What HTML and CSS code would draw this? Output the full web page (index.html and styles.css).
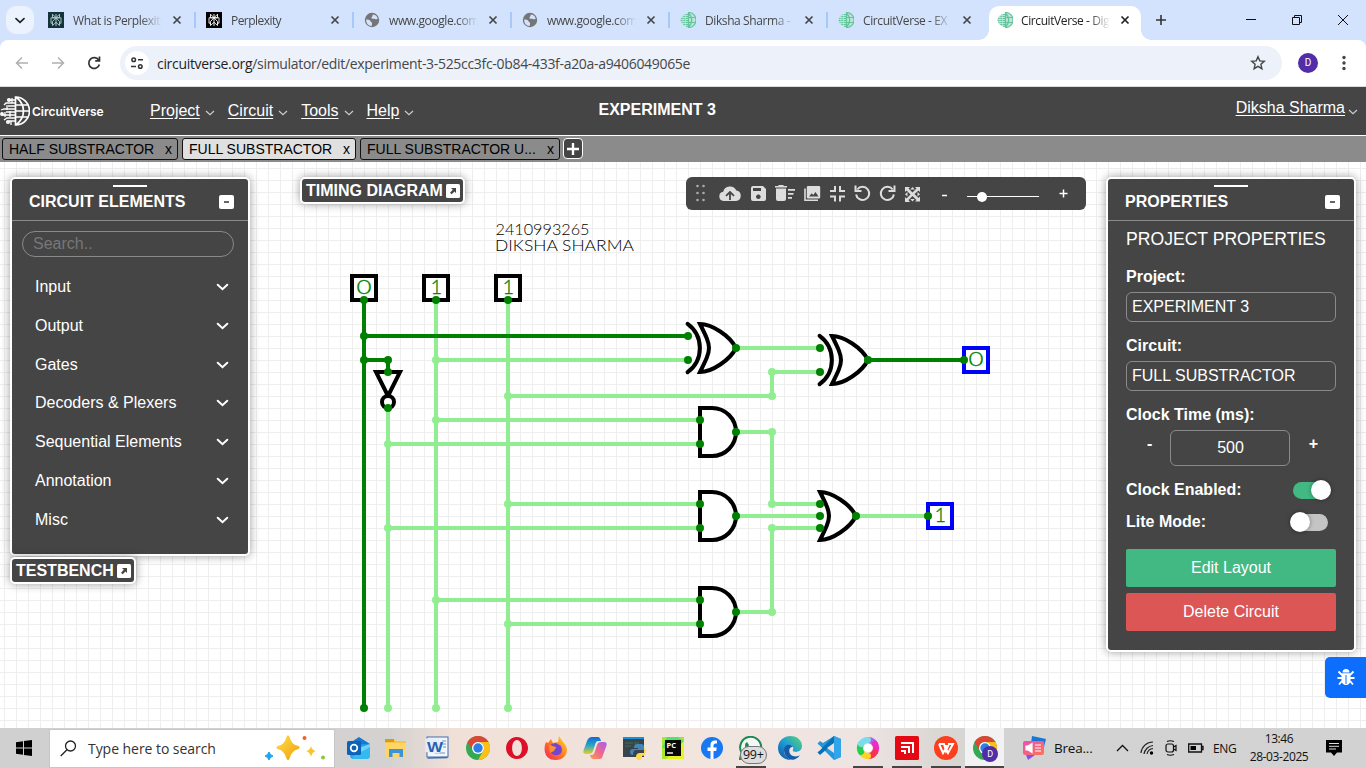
FILE: index.html
```html
<!DOCTYPE html>
<html lang="en">
<head>
<meta charset="utf-8">
<title>CircuitVerse - Digital Circuit Simulator</title>
<link rel="stylesheet" href="styles.css">
</head>
<body>
<svg class="defs" aria-hidden="true">
  <defs>
    <symbol id="x" viewBox="0 0 10 10"><path d="M1.500 1.500l7 7M8.500 1.500l-7 7" stroke="currentColor" stroke-width="1.700" fill="none"/></symbol>
    <symbol id="perp" viewBox="0 0 16 16"><g fill="none" stroke="currentColor" stroke-width=".9"><path d="M8 2v12M4.500 2.200L8 5.700l3.500-3.500v3.600h-7zM3 5.800h10v5.400h-1.500M3 5.800v5.400h1.500M8 5.800l-3.500 3.700v4L8 10.300l3.500 3.200v-4z"/></g></symbol>
    <symbol id="earth" viewBox="0 0 16 16"><circle cx="8" cy="8" r="7.200" fill="#757575"/><path d="M2.200 7.500c2 .2 3.500 0 4.300 1.700.8 1.400 2 1.200 1.500 3-.3 1 .2 1.700-.8 1.800C4 13.500 2 11 2.200 7.500zM8.500 2.400c2.500 0 4.600 1.500 5.200 4-1 1.200-1.700 1-2.700.6-1.300-.5-2.700.4-3.400-.8C7 4.800 9.200 4.500 8.500 2.400z" fill="#d3e3fd"/></symbol>
    <symbol id="globe" viewBox="0 0 30 30"><g fill="none" stroke="currentColor" stroke-width="1.700"><path d="M15.500 1a14 14 0 0 1 0 28zM16 1c10 8 10 20 0 28M15 9h13M15 15h14M15 21h13"/><path d="M15 4H9M15 7H6l-2 2M15 10H8M15 13H4l-3 1M15 16H6M15 19H2M15 22H7l-3 2M15 25H9M12 2v5M11 25v4M7 9v5M5 16v5M10 15v6" stroke-width="1.300"/><circle cx="9" cy="4" r="1.200"/><circle cx="2" cy="18" r="1.100"/><circle cx="8" cy="26" r="1.200"/></g></symbol>
    <symbol id="favglobe" viewBox="0 0 16 16"><path d="M8 .5a7.500 7.500 0 0 1 0 15zM8 2Q1 2 .5 8 1 14 8 15z" fill="#b9e6d6"/><g fill="none" stroke="currentColor"><path d="M8.500.5a7.500 7.500 0 0 1 0 15zM8.500 1q6.500 7 0 14M8 5.500h7M8 10.500h7" stroke-width="1.200"/><path d="M8 2.500H4.500M8 4.500H2.500M8 6.500H1M8 8.500H0M8 10.500H1.500M8 12.500H3M8 14.300H5.500" stroke-dasharray="2 .7"/></g></symbol>
    <symbol id="chev" viewBox="0 0 12 8"><path d="M1.200 1.800L6 6.200l4.800-4.400" fill="none" stroke="currentColor" stroke-width="2" stroke-linecap="round"/></symbol>
    <symbol id="thin" viewBox="0 0 10 6"><path d="M1 1l4 3.600L9 1" fill="none" stroke="currentColor" stroke-width="1.200"/></symbol>
    <symbol id="chrome" viewBox="0 0 24 24"><circle cx="12" cy="12" r="12" fill="#34a853"/><path d="M1.600 6A12 12 0 0 1 22.400 6H12a6 6 0 0 0-5.200 9z" fill="#dd4535"/><path d="M22.400 6A12 12 0 0 1 12 24l5.200-9A6 6 0 0 0 12 6z" fill="#fbc116"/><circle cx="12" cy="12" r="6" fill="#fff"/><circle cx="12" cy="12" r="4.700" fill="#2f7de9"/></symbol>
    <symbol id="pop" viewBox="0 0 14 14"><rect width="14" height="14" rx="1.500" fill="#fff"/><path d="M5 4h5v5L8.500 7.500 5.700 10.300 4 8.700l2.800-2.900z" fill="#454545"/></symbol>
    <linearGradient id="fire" x1="0" y1="1" x2="1" y2="0"><stop offset="0" stop-color="#f31f66"/><stop offset=".5" stop-color="#ff7a20"/><stop offset="1" stop-color="#ffe030"/></linearGradient>
    <linearGradient id="cpA" x1="0" y1="0" x2="0" y2="1"><stop offset="0" stop-color="#1465d8"/><stop offset=".5" stop-color="#27a8c8"/><stop offset="1" stop-color="#e8cf22"/></linearGradient>
    <linearGradient id="cpB" x1="1" y1="0" x2="0" y2="1"><stop offset="0" stop-color="#a65ef0"/><stop offset=".5" stop-color="#ef6590"/><stop offset="1" stop-color="#ff9c50"/></linearGradient>
    <linearGradient id="edge" x1="0" y1="1" x2="1" y2="0"><stop offset="0" stop-color="#0c4f9e"/><stop offset=".5" stop-color="#209cd8"/><stop offset="1" stop-color="#5bd66d"/></linearGradient>
    <linearGradient id="gold" x1="0" y1="0" x2="1" y2="1"><stop offset="0" stop-color="#ffda45"/><stop offset="1" stop-color="#f0a410"/></linearGradient>
    <linearGradient id="news" x1="0" y1="0" x2="1" y2="1"><stop offset="0" stop-color="#ea4fb4"/><stop offset="1" stop-color="#ff7550"/></linearGradient>
  </defs>
</svg>

<header class="tabstrip">
  <div class="tab-search"><svg width="10" height="7"><use href="#chev"/></svg></div>
  <div class="tab"><svg class="fav perp teal" ><use href="#perp"/></svg><span class="t">What is Perplexity</span><svg class="close"><use href="#x"/></svg></div>
  <div class="tab"><svg class="fav perp black"><use href="#perp"/></svg><span class="t">Perplexity</span><svg class="close"><use href="#x"/></svg></div>
  <div class="tab"><svg class="fav"><use href="#earth"/></svg><span class="t">www.google.com</span><svg class="close"><use href="#x"/></svg></div>
  <div class="tab"><svg class="fav"><use href="#earth"/></svg><span class="t">www.google.com</span><svg class="close"><use href="#x"/></svg></div>
  <div class="tab"><svg class="fav green"><use href="#favglobe"/></svg><span class="t">Diksha Sharma -</span><svg class="close"><use href="#x"/></svg></div>
  <div class="tab last"><svg class="fav green"><use href="#favglobe"/></svg><span class="t">CircuitVerse - EX</span><svg class="close"><use href="#x"/></svg></div>
  <div class="tab active"><svg class="fav green"><use href="#favglobe"/></svg><span class="t">CircuitVerse - Dig</span><svg class="close"><use href="#x"/></svg></div>
  <svg class="newtab" width="12" height="12" viewBox="0 0 12 12"><path d="M6 1v10M1 6h10" stroke="#333" stroke-width="1.600"/></svg>
  <div class="win">
    <svg width="12" height="12" viewBox="0 0 12 12"><path d="M1 5.500h10" stroke="#111"/></svg>
    <svg width="12" height="12" viewBox="0 0 12 12"><path d="M1.500 3.500h7v7h-7zM3.500 3.500v-2h7v7h-2" fill="none" stroke="#111"/></svg>
    <svg width="12" height="12" viewBox="0 0 12 12"><path d="M1 1l10 10M11 1L1 11" stroke="#111"/></svg>
  </div>
</header>

<div class="toolbar">
  <div class="toolbar-in">
    <svg class="nav" viewBox="0 0 16 16"><path d="M14 8H3M8 2.500L2.500 8 8 13.500" fill="none" stroke="#b0b0b0" stroke-width="1.500"/></svg>
    <svg class="nav" viewBox="0 0 16 16"><path d="M2 8h11M8 2.500L13.500 8 8 13.500" fill="none" stroke="#b0b0b0" stroke-width="1.500"/></svg>
    <svg class="nav" viewBox="0 0 16 16"><path d="M12.700 5A5.400 5.400 0 1 0 13.400 9.500M13.500 1.500v4.300H9.200" fill="none" stroke="#333" stroke-width="1.700"/></svg>
    <div class="omni">
      <span class="site"><svg width="14" height="14" viewBox="0 0 14 14"><g fill="none" stroke="#333" stroke-width="1.500"><circle cx="3.700" cy="3.700" r="1.800"/><path d="M8 3.700h5M1 10.500h5"/><circle cx="10.300" cy="10.500" r="1.800"/></g></svg></span>
      <span class="url"><b>circuitverse.org</b>/simulator/edit/experiment-3-525cc3fc-0b84-433f-a20a-a9406049065e</span>
      <svg class="star" width="16" height="16" viewBox="0 0 16 16"><path d="M8 1.700l1.800 4.200 4.500.4-3.400 3 1 4.400L8 11.400l-3.900 2.300 1-4.400-3.400-3 4.500-.4z" fill="none" stroke="#444" stroke-width="1.400"/></svg>
    </div>
    <span class="avatar">D</span>
    <svg class="dots" width="4" height="16" viewBox="0 0 4 16"><g fill="#444"><circle cx="2" cy="2.500" r="1.700"/><circle cx="2" cy="8" r="1.700"/><circle cx="2" cy="13.500" r="1.700"/></g></svg>
  </div>
</div>

<nav class="appnav">
  <div class="brand"><svg width="30" height="30"><use href="#globe"/></svg><span>CircuitVerse</span></div>
  <div class="menu">
    <a>Project</a><svg><use href="#thin"/></svg>
    <a>Circuit</a><svg><use href="#thin"/></svg>
    <a>Tools</a><svg><use href="#thin"/></svg>
    <a>Help</a><svg><use href="#thin"/></svg>
  </div>
  <div class="project">EXPERIMENT 3</div>
  <div class="user"><a>Diksha Sharma</a><svg><use href="#thin"/></svg></div>
</nav>

<div class="ctabs">
  <div class="ctab w1"><span>HALF SUBSTRACTOR</span><span>x</span></div>
  <div class="ctab w2 on"><span>FULL SUBSTRACTOR</span><span>x</span></div>
  <div class="ctab w3"><span>FULL SUBSTRACTOR U...</span><span>x</span></div>
  <div class="cadd"><svg width="12" height="12" viewBox="0 0 12 12"><path d="M6 0v12M0 6h12" stroke="#fff" stroke-width="2.400"/></svg></div>
</div>

<main class="canvas">
  <svg class="circuit" viewBox="0 162 1366 566">
    <g fill="none" stroke="#90ee90" stroke-width="4">
      <path d="M436 300V708M508 300V708M388 408V708"/>
      <path d="M436 360H688M508 396H772V372H820M436 420H700M388 444H700M508 504H700M388 528H700M436 600H700M508 624H700"/>
      <path d="M736 348H820M736 432H772V504H820M736 516H820M736 612H772V528H820M856 516H928"/>
    </g>
    <path d="M364 300V708M364 336H688M364 360H388V372M868 360H964" fill="none" stroke="#008000" stroke-width="4"/>
    <g fill="#90ee90">
      <circle cx="436" cy="360" r="4"/><circle cx="508" cy="396" r="4"/><circle cx="436" cy="420" r="4"/><circle cx="388" cy="444" r="4"/><circle cx="508" cy="504" r="4"/><circle cx="388" cy="528" r="4"/><circle cx="436" cy="600" r="4"/><circle cx="508" cy="624" r="4"/>
      <circle cx="388" cy="708" r="4"/><circle cx="436" cy="708" r="4"/><circle cx="508" cy="708" r="4"/>
      <circle cx="772" cy="396" r="4"/><circle cx="772" cy="372" r="4"/><circle cx="772" cy="432" r="4"/><circle cx="772" cy="504" r="4"/><circle cx="772" cy="528" r="4"/><circle cx="772" cy="612" r="4"/>
    </g>
    <g fill="#fff" stroke="#000" stroke-width="4">
      <rect x="352" y="276" width="24" height="24"/><rect x="424" y="276" width="24" height="24"/><rect x="496" y="276" width="24" height="24"/>
      <path d="M376 372h24l-12 24z"/><circle cx="388" cy="402" r="6"/>
      <path d="M700 324C712 324 730 336 736 348C730 360 712 372 700 372C712 348 712 348 700 324Z"/>
      <path d="M687.600 323.800A30 30 0 0 1 687.600 372.200" fill="none" stroke-linecap="round"/>
      <path d="M832 336C844 336 862 348 868 360C862 372 844 384 832 384C844 360 844 360 832 336Z"/>
      <path d="M819.600 335.800A30 30 0 0 1 819.600 384.200" fill="none" stroke-linecap="round"/>
      <path d="M820 492C832 492 850 504 856 516C850 528 832 540 820 540C832 516 832 516 820 492Z"/>
      <path d="M700 408H712A24 24 0 0 1 712 456H700Z"/>
      <path d="M700 492H712A24 24 0 0 1 712 540H700Z"/>
      <path d="M700 588H712A24 24 0 0 1 712 636H700Z"/>
    </g>
    <g fill="#fff" stroke="#00f" stroke-width="4"><rect x="964" y="348" width="24" height="24"/><rect x="928" y="504" width="24" height="24"/></g>
    <g fill="#008000">
      <circle cx="364" cy="300" r="4"/><circle cx="436" cy="300" r="4"/><circle cx="508" cy="300" r="4"/>
      <circle cx="364" cy="336" r="4"/><circle cx="364" cy="360" r="4"/><circle cx="388" cy="360" r="4"/><circle cx="388" cy="372" r="4"/><circle cx="388" cy="408" r="4"/><circle cx="364" cy="708" r="4"/>
      <circle cx="688" cy="336" r="4"/><circle cx="688" cy="360" r="4"/><circle cx="736" cy="348" r="4"/><circle cx="820" cy="348" r="4"/><circle cx="820" cy="372" r="4"/><circle cx="868" cy="360" r="4"/><circle cx="964" cy="360" r="4"/>
      <circle cx="700" cy="420" r="4"/><circle cx="700" cy="444" r="4"/><circle cx="736" cy="432" r="4"/>
      <circle cx="700" cy="504" r="4"/><circle cx="700" cy="528" r="4"/><circle cx="736" cy="516" r="4"/>
      <circle cx="700" cy="600" r="4"/><circle cx="700" cy="624" r="4"/><circle cx="736" cy="612" r="4"/>
      <circle cx="820" cy="504" r="4"/><circle cx="820" cy="516" r="4"/><circle cx="820" cy="528" r="4"/><circle cx="856" cy="516" r="4"/><circle cx="928" cy="516" r="4"/>
    </g>
    <g class="digit">
      <text x="356.500" y="294" textLength="15" lengthAdjust="spacingAndGlyphs">0</text><text x="430.500" y="294">1</text><text x="502.500" y="294">1</text>
      <text x="968.500" y="366" textLength="15" lengthAdjust="spacingAndGlyphs">0</text><text x="934.500" y="522">1</text>
    </g>
    <g class="label"><text x="495.500" y="234.500" textLength="94" lengthAdjust="spacingAndGlyphs">2410993265</text><text x="495" y="251" textLength="139" lengthAdjust="spacingAndGlyphs">DIKSHA SHARMA</text></g>
  </svg>

  <section class="panel elements">
    <div class="phead"><i class="grip"></i><span>CIRCUIT ELEMENTS</span><i class="min"></i></div>
    <div class="search">Search..</div>
    <div class="items">
      <div><span>Input</span><svg><use href="#chev"/></svg></div>
      <div><span>Output</span><svg><use href="#chev"/></svg></div>
      <div><span>Gates</span><svg><use href="#chev"/></svg></div>
      <div><span>Decoders &amp; Plexers</span><svg><use href="#chev"/></svg></div>
      <div><span>Sequential Elements</span><svg><use href="#chev"/></svg></div>
      <div><span>Annotation</span><svg><use href="#chev"/></svg></div>
      <div><span>Misc</span><svg><use href="#chev"/></svg></div>
    </div>
  </section>
  <div class="panel chip testbench"><span>TESTBENCH</span><svg width="14" height="14"><use href="#pop"/></svg></div>
  <div class="panel chip timing"><span>TIMING DIAGRAM</span><svg width="14" height="14"><use href="#pop"/></svg></div>

  <div class="quick">
    <svg width="400" height="33" viewBox="686 177 400 33">
      <g fill="#ddd">
        <g fill="#aaa"><circle cx="697.500" cy="186" r="1.300"/><circle cx="703.500" cy="186" r="1.300"/><circle cx="697.500" cy="193" r="1.300"/><circle cx="703.500" cy="193" r="1.300"/><circle cx="697.500" cy="200" r="1.300"/><circle cx="703.500" cy="200" r="1.300"/></g>
        <path d="M723.500 201a4.700 4.700 0 0 1-.3-9.300 7 7 0 0 1 13.100-1.200A5.300 5.300 0 0 1 736 201z"/>
        <path d="M730 192.500v7.500M726 195.800l4-3.800 4 3.800" fill="none" stroke="#454545" stroke-width="1.800"/>
        <path fill-rule="evenodd" d="M751 188q0-2 2-2h10l3 3v10q0 2-2 2h-11q-2 0-2-2zM753 188v3h8v-3zM758.300 194.500a2.300 2.300 0 1 0 .1 0z"/>
        <path d="M775 186h12v1.600h-12zM776 188.500h10v10.500q0 2-2 2h-6q-2 0-2-2zM778.500 185h5v1h-5zM788 189h7v1.700h-7zM788 193h5.500v1.700H788zM788 197h4v1.700h-4z"/>
        <path fill-rule="evenodd" d="M808 186h11q1.200 0 1.200 1.200v10q0 1.300-1.200 1.300h-11q-1.200 0-1.200-1.300v-10q0-1.200 1.200-1.200zM809 196.500h9.500l-3-4.500-2.300 3-1.500-1.800z"/>
        <g fill="none" stroke="#ddd" stroke-width="1.600"><path d="M805 188.500v11.800h13"/><path stroke-width="2" d="M830 191h5v-5M845 191h-5v-5M830 196.500h5v5M845 196.500h-5v5"/>
        <path stroke-width="2" d="M857.300 189.500a6.600 6.600 0 1 1-1.200 5M855.500 185.500v5.500h6"/><path stroke-width="2" d="M892.700 189.500a6.600 6.600 0 1 0 1.200 5M894.500 185.500v5.500h-6"/></g>
        <path d="M905 187h5l-1.500 1.500 4 4 4-4L915 187h5v5l-1.500-1.500-4 3.500 4 4 1.500-1.500v5h-5l1.500-1.500-4-4-4 4L910 202h-5v-5l1.500 1.500 4-4-4-4L905 192z"/><path d="M912.500 187l2.300 2.500h-4.600zM912.500 201.500l2.300-2.500h-4.600zM905 194.300l2.500-2.300v4.600zM920 194.300l-2.500-2.300v4.600z"/>
      </g>
      <path d="M967 196.500h72" stroke="#fff"/><circle cx="982" cy="197" r="5" fill="#fff"/>
      <path d="M942 195.500h5M1059.500 193.500h8M1063.500 189.500v8" stroke="#fff" stroke-width="1.500"/>
    </svg>
  </div>

  <section class="panel props">
    <div class="phead"><i class="grip"></i><span>PROPERTIES</span><i class="min"></i></div>
    <div class="pbody">
      <h2>PROJECT PROPERTIES</h2>
      <label>Project:</label><div class="field">EXPERIMENT 3</div>
      <label>Circuit:</label><div class="field">FULL SUBSTRACTOR</div>
      <label>Clock Time (ms):</label>
      <div class="stepper"><b>-</b><div>500</div><b>+</b></div>
      <div class="switch"><b>Clock Enabled:</b><i class="tg on"></i></div>
      <div class="switch"><b>Lite Mode:</b><i class="tg off"></i></div>
      <div class="btn ok">Edit Layout</div>
      <div class="btn danger">Delete Circuit</div>
    </div>
  </section>

  <div class="bug"><svg width="18" height="18" viewBox="0 0 18 18"><g fill="#fff"><path d="M5.500 4.500a3.500 3.500 0 0 1 7 0zM4.500 5.500h9v7a4.500 4.500 0 0 1-9 0z"/></g><path d="M1.500 3.500l3 3h9l3-3M.5 10h17M2 16.500l3-3.500M16 16.500L13 13" fill="none" stroke="#fff" stroke-width="1.800"/><path d="M9 7v9" stroke="#0d6efd" stroke-width="1"/></svg></div>
</main>

<footer class="taskbar">
  <div class="start"><svg width="16" height="16" viewBox="0 0 16 16"><path d="M0 2.200l7-1v6.300H0zM8 1.100L16 0v7.500H8zM0 8.500h7v6.300l-7-1zM8 8.500h8V16l-8-1.100z"/></svg></div>
  <div class="tsearch">
    <svg width="17" height="17" viewBox="0 0 17 17"><circle cx="10.500" cy="6" r="5" fill="none" stroke="#222" stroke-width="1.300"/><path d="M7 9.700L.7 16" stroke="#222" stroke-width="1.300"/></svg>
    <span>Type here to search</span>
    <svg class="sparks" width="62" height="26" viewBox="264 735 62 26"><path d="M288 737q2 9 10 10.500-8 2-10 11-2-9-10-11 8-1.500 10-10.500z" fill="url(#gold)" stroke="url(#gold)" stroke-width="3" stroke-linejoin="round"/><path d="M311 746q1 4.500 5 5-4 1-5 6-1-5-5-6 4-.5 5-5z" fill="#f9c330"/><path d="M269 752q1 3 4 4-3 1-4 4-1-3-4-4 3-1 4-4z" fill="#20a4ec" stroke="#20a4ec"/><circle cx="304.500" cy="738" r="2" fill="#f0622d"/><circle cx="323" cy="757.500" r="2" fill="#8cc63f"/></svg>
  </div>
  <div class="apps">
    <div class="left1"><svg viewBox="0 0 24 24"><path d="M3 7l9-6 11 7-11 7z" fill="#1678ce"/><path d="M3 9l20-1v11q0 4-4 4H7q-4 0-4-4z" fill="#20a4ea"/><path d="M23 8v12L9 13z" fill="#72d3fa"/><path d="M5 21l18-10v9q0 3-4 3H7z" fill="#35baf0"/><rect y="5" width="14" height="14" rx="1.500" fill="#0c62b9"/><circle cx="7" cy="12" r="3.300" fill="none" stroke="#fff" stroke-width="1.700"/></svg></div>
    <div class="left1"><svg viewBox="0 0 24 24"><path d="M1 3h9l2 2h10v16H1z" fill="#f6c544"/><path d="M1 3h9v3H1z" fill="#dc9a13"/><path d="M1 7h21v14H1z" fill="#ffd565"/><path d="M5 21v-8h14v8h-3.500v-4h-7v4z" fill="#3c94d8"/></svg></div>
    <div class="left1"><svg viewBox="0 0 24 24"><rect x="2" y="1" width="21" height="20" fill="#f2f6fc" stroke="#446cac"/><path d="M10 17h10M17 5h4M17 8h4M18 11h3" stroke="#6c91cb"/><path d="M.5 2.500h14v15L.5 16z" fill="#e4edf9"/><path d="M2.500 22l20-.5" stroke="#446cac" stroke-width="1.500"/><text x="2" y="16" class="word" textLength="16" lengthAdjust="spacingAndGlyphs">W</text></svg></div>
    <div><svg viewBox="0 0 24 24"><use href="#chrome"/></svg></div>
    <div><svg viewBox="0 0 24 24"><path fill-rule="evenodd" d="M12 1c6 0 11 5 11 11s-5 11-11 11S1 18 1 12 6 1 12 1zM12 4C5.500 4 5.500 20 12 20s6.500-16 0-16z" fill="#dc1028"/></svg></div>
    <div><svg viewBox="0 0 24 24"><path d="M2 6l2 1 3-4 2 4 5-1 1-6 4 6c8 7 3 18-7 18C0 24-1 13 2 6z" fill="url(#fire)"/><path d="M7 8l5-1 5 3c3 7-2 10-6 9-5-1-5-5-3-6 2 1 4 0 4-1-3-1-5-2-5-4z" fill="#7544d5"/><path d="M5 9l7 2-2 4-4 2z" fill="#ff922a"/></svg></div>
    <div><svg viewBox="0 0 24 24"><path d="M9 1h6q2 0 3 4H15q-2 0-3 4l-2 6q-1 3-4 3H3q-4 0-2-5l3-8q1.500-4 5-4z" fill="url(#cpA)"/><path d="M15 23H10q-2 0-3-4h2q2 0 3-4l2-6q1-3 4-3h3q4 0 2 5l-3 8q-1 4-3 4z" fill="url(#cpB)"/></svg></div>
    <div><svg viewBox="0 0 24 24"><rect x="1" y="1" width="21" height="20" fill="#39434e"/><path d="M1 1h21v2H1z" fill="#1592dc"/><path d="M3 7h8M3 10h6M12 7h5" stroke="#307a3c"/><path d="M15 8h4q3 0 3 3v3h-8q-3 0-3 5-3 0-3-3 0-3 3-3h5v-1h-4q0-4 3-4z" fill="#4385bb"/><path d="M22 12q3 1 1 6-1 2-3 2v1q0 3-3 3t-3-3q0-4 4-4h4z" fill="#ffd84d"/></svg></div>
    <div><svg viewBox="0 0 24 24"><rect x="1" y="1" width="22" height="22" fill="#a8e730"/><path d="M1 12l5-11h11l6 4v7z" fill="#4ce56c"/><path d="M23 5v18H5z" fill="#e5f224"/><rect x="4" y="4" width="16" height="16" fill="#080808"/><text x="5.500" y="12" class="pc">PC</text><path d="M6 17h6" stroke="#fff" stroke-width="1.400"/></svg></div>
    <div><svg viewBox="0 0 24 24"><circle cx="12" cy="12" r="11" fill="#1877f2"/><path d="M10.500 23v-8H7.500v-3.500h3V9q0-4.500 4.500-4.500h2v3h-1.500q-2 0-2 2v2h3.200l-.5 3.500h-2.700v8z" fill="#fff"/></svg></div>
    <div class="run"><svg viewBox="0 0 24 24"><path d="M1 23l1.500-6.500A10.500 10.500 0 1 1 7.500 21z" fill="#f5f5f5" stroke="#1a8a53" stroke-width="2"/><path d="M8 6l2 3-1 2q1.500 3 4 4l2-2 3 2q-2 4-6 2.500Q7 15.500 6 10q-.3-3 2-4z" fill="#1a8a53"/></svg><em>99+</em></div>
    <div><svg viewBox="0 0 24 24"><path d="M0 12C0 4 7 0 12 0c8 0 12 5 12 10 0 6-7 7-9 5-1-1 1-2 0-4-2-4-9-2-9 4 0 4 3 7 7 9C5 24 0 18 0 12z" fill="url(#edge)"/><path d="M6 14c0-5 6-7 9-3-5-1-5 8 0 9 3 1 6 0 7-1-6 9-16 4-16-5z" fill="#125ca8"/></svg></div>
    <div><svg viewBox="0 0 24 24"><path d="M17 0l7 3v18l-7 3L2 9l-1.500-1.500L3 5l3 2z" fill="#2396dc"/><path d="M17 0v7L3 19 .5 16.500z" fill="#0871b6"/><path d="M17 7l-7 5 7 5z" fill="#ece1dd"/><path d="M17 0l7 3v18l-7 3z" fill="#32a5ea"/><path d="M0 10.500l2-1.500 3 3-3 3-2-1.500 1.500-1.500z" fill="#f0e4e0"/></svg></div>
    <div class="run"><svg viewBox="0 0 24 24"><g fill="none" stroke-width="6" stroke-linecap="round"><path d="M12 4a8 8 0 0 1 7 4" stroke="#b65bea"/><path d="M19 8a8 8 0 0 1 0 8" stroke="#f02bc0"/><path d="M19 16a8 8 0 0 1-7 4" stroke="#f8314d"/><path d="M12 20a8 8 0 0 1-7-4" stroke="#ffd523"/><path d="M5 16a8 8 0 0 1 0-8" stroke="#25cf48"/><path d="M5 8a8 8 0 0 1 7-4" stroke="#7cdcec"/></g><circle cx="12" cy="12" r="4" fill="#fff"/></svg></div>
    <div class="run"><svg viewBox="0 0 24 24"><rect width="24" height="24" rx="1.500" fill="#e50914"/><path d="M6 7h12v10M6 11h8v6M6 15h4v3" fill="none" stroke="#fff" stroke-width="2"/></svg></div>
    <div class="run"><svg viewBox="0 0 24 24"><circle cx="12" cy="12" r="12" fill="#fc3f1e"/><path d="M5 8h5l2 7 2-5h-4M5 8l4 9 3-5 2 5 5-9h-5" fill="none" stroke="#fff" stroke-width="2"/></svg></div>
    <div class="run cur"><svg viewBox="0 0 24 24"><use href="#chrome"/></svg><em>D</em></div>
  </div>
  <div class="news"><svg width="24" height="24" viewBox="0 0 24 24"><path d="M10 0l14 3-3 12H8z" fill="#1976d2"/><path d="M2 14h18l-14 10z" fill="#8450ed"/><rect x="1" y="5" width="21" height="14" rx="2" fill="url(#news)"/><path d="M4 10h2l4-2.500v9L6 14H4zM13 9h6M13 12h6M13 15h6" fill="#fff" stroke="#fff" stroke-width="1.200"/></svg><span>Brea...</span></div>
  <div class="tray">
    <svg width="13" height="8" viewBox="0 0 13 8"><path d="M1 7l5.500-5.500L12 7" fill="none" stroke="#111" stroke-width="1.300"/></svg>
    <svg width="14" height="14" viewBox="0 0 14 14"><g fill="none" stroke="#222" stroke-width="1.200"><path d="M1 12A12 12 0 0 1 13 1M4 13a10 10 0 0 1 9-8.500M7 13a7 7 0 0 1 6-5.500"/></g><circle cx="11.500" cy="12" r="1.700"/></svg>
    <svg width="12" height="16" viewBox="0 0 12 16"><g fill="none" stroke="#111" stroke-width="1.200"><rect x="1" y="4" width="7.500" height="8" rx="2"/><path d="M8.500 7l2.500-1.500v5L8.500 9M2 1.500q3-1.500 7 0M2 14.500q3 1.500 7 0"/></g></svg>
    <svg class="batt" width="16" height="10" viewBox="0 0 16 10"><path d="M.7 1h12.800v8H.7zM13.500 3.500h1.500v3h-1.500" fill="none" stroke="#111" stroke-width="1.300"/><path d="M2.500 3H8v4H2.500z"/></svg>
    <span class="lang">ENG</span>
    <div class="clock"><span>13:46</span><span>28-03-2025</span></div>
    <svg class="note" width="16" height="16" viewBox="0 0 16 16"><path d="M0 0h16v12.500h-5L8 16l-3-3.500H0z"/><path d="M3 3.500h10M3 6.300h10M3 9h7" stroke="#ddd"/></svg>
  </div>
</footer>
</body>
</html>
```
FILE: styles.css
```css
* { box-sizing: border-box; }
body { margin: 0; width: 1366px; height: 768px; overflow: hidden; display: flex; flex-direction: column; font-family: "Liberation Sans", Arial, sans-serif; font-size: 16px; }
svg { display: block; flex: none; }
.defs { position: absolute; width: 0; height: 0; }

/* browser tab strip */
.tabstrip { height: 40px; background: #d3e3fd; display: flex; align-items: center; font: 12px "Open Sans", sans-serif; color: #474747; padding-left: 6px; }
.tab-search { width: 28px; height: 28px; border-radius: 10px; background: #ecf2fe; display: flex; align-items: center; justify-content: center; margin-right: 4px; color: #222; }
.tab { width: 158px; height: 40px; padding: 0 14px 0 10px; display: flex; align-items: center; background: linear-gradient(#a8c7fa, #a8c7fa) 100% 12px / 2px 16px no-repeat; color: #474747; }
.tab.last { background: none; }
.tab .t { width: 89px; margin-left: 9px; white-space: nowrap; overflow: hidden; letter-spacing: -.4px; -webkit-mask-image: linear-gradient(90deg, #000 68px, transparent 89px); mask-image: linear-gradient(90deg, #000 68px, transparent 89px); }
.tab:nth-child(3) .t { letter-spacing: -.55px; }
.fav { width: 16px; height: 16px; }
.fav.teal { background: #13343b; color: #b9cfd0; }
.fav.black { background: #000; color: #fff; }
.fav.green { color: #62c39d; }
.close { width: 10px; height: 10px; margin-left: auto; margin-right: 0; }
.tab.active { width: 152px; height: 34px; margin-left: 3px; align-self: flex-end; padding: 0 11px 6px 8px; background: #fff; border-radius: 10px 10px 0 0; color: #222; position: relative; }
.tab.active .t { margin-left: 8px; }
.tab.active::before, .tab.active::after { content: ""; position: absolute; bottom: 0; width: 10px; height: 10px; }
.tab.active::before { left: -10px; background: radial-gradient(circle at 0 0, transparent 9.500px, #fff 10px); }
.tab.active::after { right: -10px; background: radial-gradient(circle at 100% 0, transparent 9.500px, #fff 10px); }
.newtab { margin-left: 14px; }
.win { margin-left: auto; display: flex; gap: 34px; padding-right: 17px; }

/* address bar */
.toolbar { height: 47px; background: #d3e3fd; border-bottom: 1px solid #dcdcdc; }
.toolbar-in { height: 46px; background: #fff; border-radius: 8px 8px 0 0; display: flex; align-items: center; padding-left: 14px; }
.nav { width: 16px; height: 16px; margin-right: 20px; }
.omni { width: 1162px; height: 34px; margin-left: -2px; border-radius: 17px; background: #ecf1fa; display: flex; align-items: center; padding-left: 5px; }
.site { width: 24px; height: 24px; border-radius: 50%; background: #fff; display: flex; align-items: center; justify-content: center; }
.url { margin-left: 8px; font: 14px "Open Sans", sans-serif; color: #474747; letter-spacing: -.315px; white-space: nowrap; }
.url b { font-weight: 400; color: #1f1f1f; }
.star { margin-left: auto; margin-right: 16px; }
.avatar { width: 20px; height: 20px; margin-left: 16px; border-radius: 50%; background: #512da8; color: #fff; font: 10px/20px Roboto, sans-serif; text-align: center; }
.dots { margin-left: 24px; }

/* application navigation */
.appnav { height: 49px; background: #454545; border-bottom: 1px solid #fff; color: #fff; display: flex; align-items: center; position: relative; flex: none; }
.brand { width: 150px; display: flex; align-items: center; gap: 2px; font: 600 12px Inter, sans-serif; }
.menu { display: flex; align-items: center; }
.menu a, .user a { text-decoration: underline; text-underline-offset: 2px; }
.menu svg, .user svg { width: 10px; height: 6px; margin: 3px 13px 0 5px; color: #ccc; }
.project { position: absolute; left: 598.500px; top: 14px; font-weight: 700; }
.user { margin-left: auto; display: flex; align-items: center; padding-bottom: 6px; }
.user svg { margin: 8px 8px 0 3px; }
.ctabs { height: 26px; flex: none; background: #8b8b8b; display: flex; gap: 4px; padding: 2px; font-size: 14px; }
.ctab { height: 22px; border: 1px solid #111; border-radius: 3px; display: flex; justify-content: space-between; align-items: center; padding: 0 5px 1px 6px; white-space: nowrap; }
.ctab.on { background: #e0e0e0; }
.w1 { width: 176px; } .w2 { width: 174px; } .w3 { width: 200px; }
.cadd { width: 20px; height: 21px; margin-left: -1px; background: #454545; border: 1px solid #fff; border-radius: 4px; display: flex; align-items: center; justify-content: center; }

/* drawing area */
.canvas { height: 566px; flex: none; position: relative; background: linear-gradient(90deg, #eee 1px, transparent 1px) 4px 0/12px 12px, linear-gradient(#eee 1px, transparent 1px) 0 6px/12px 12px, #fff; overflow: hidden; }
.circuit { width: 1366px; height: 566px; }
.digit { font: 300 20px Lato, sans-serif; fill: #008000; stroke: #008000; stroke-width: .3px; }
.label { font: 300 16px Lato, sans-serif; fill: #000; }

.panel { position: absolute; border: 2px solid #fff; border-radius: 5px; background: #454545; color: #fff; box-shadow: 0 0 10px rgba(0, 0, 0, .4); }
.elements { left: 10px; top: 15px; width: 240px; height: 379px; }
.phead { height: 42px; border-bottom: 1px solid #8a8a8a; position: relative; display: flex; align-items: center; justify-content: space-between; padding: 4px 14px 0 17px; font-weight: 700; }
.grip { position: absolute; left: 50%; margin-left: -17px; top: 6px; width: 34px; height: 2px; background: #fff; }
.elements .phead span, .props .phead span { padding-top: 1px; }
.min { width: 15px; height: 14px; border-radius: 2px; background: linear-gradient(#666, #666) center/5px 2px no-repeat #fff; }
.search { margin: 10px 0 0 10px; width: 212px; height: 26px; border: 1px solid #8a8a8a; border-radius: 13px; padding-left: 10px; line-height: 23px; color: #777; }
.items { padding: 10.600px 19px 0 23px; }
.items div { height: 38.830px; display: flex; align-items: center; justify-content: space-between; }
.items svg { width: 13px; height: 8px; }
.chip { display: flex; align-items: center; gap: 3px; height: 27px; padding: 0 3px 0 4px; font-weight: 700; white-space: nowrap; }
.testbench { left: 10px; top: 395px; width: 126px; }
.timing { left: 300px; top: 15px; width: 165px; }
.quick { position: absolute; left: 686px; top: 15px; width: 400px; height: 33px; border-radius: 6px; background: #454545; }

.props { left: 1106px; top: 15px; width: 250px; height: 475px; }
.pbody { padding: 8px 18px; display: flex; flex-direction: column; }
.pbody h2 { margin: 0; font-size: 17.600px; line-height: 20px; font-weight: 400; white-space: nowrap; }
.pbody label { font-weight: 700; line-height: 18px; margin-top: 16px; }
.pbody h2 + label { margin-top: 19px; }
.field { height: 30px; margin-top: 6px; border: 1px solid #8a8a8a; border-radius: 6px; padding-left: 5px; line-height: 27px; }
.field + label { margin-top: 15px; }
.stepper { margin-top: 6px; display: flex; justify-content: space-between; padding: 0 18px 0 21px; line-height: 27px; }
.stepper div { width: 120px; height: 36px; border: 1px solid #8a8a8a; border-radius: 6px; line-height: 33px; text-align: center; }
.switch { height: 32px; display: flex; justify-content: space-between; align-items: center; }
.stepper + .switch { margin-top: 8px; }
.tg { width: 38px; height: 20px; position: relative; }
.tg.on { margin-right: 5px; } .tg.off { margin-right: 8px; }
.tg::before { content: ""; position: absolute; left: 0; top: 2px; width: 36px; height: 17px; border-radius: 9px; background: #42b983; }
.tg.off::before { left: 2px; top: 2px; background: #c4c4c4; }
.tg::after { content: ""; position: absolute; right: 0; top: 0; width: 20px; height: 20px; border-radius: 50%; background: #fff; box-shadow: 0 0 4px rgba(0, 0, 0, .4); }
.tg.off::after { right: auto; left: 0; }
.btn { height: 38px; border-radius: 2px; line-height: 37px; text-align: center; }
.ok { background: #42b983; margin-top: 11px; }
.danger { background: #dc5656; margin-top: 6px; }
.bug { position: absolute; left: 1325px; top: 495px; width: 41px; height: 41px; border-radius: 5px 0 0 5px; background: #0d6efd; display: flex; align-items: center; justify-content: center; padding-bottom: 2px; }

/* taskbar */
.taskbar { height: 40px; flex: none; display: flex; align-items: center; background: linear-gradient(90deg, #d0d0d0 0, #d4d2d1 390px, #f0e0d8 455px, #f1e5de 700px, #eee4e3 860px, #dad7d3 940px, #d3d3d3 1010px, #d2d2d2); font: 14px "Open Sans", sans-serif; color: #111; }
.start { width: 49px; padding-left: 16px; flex: none; }
.tsearch { width: 286px; flex: none; height: 39px; background: #fff; border: 1px solid #c6c6c6; display: flex; align-items: center; padding-left: 10px; }
.tsearch span { margin-left: 11px; letter-spacing: -.05px; color: #333; white-space: nowrap; }
.sparks { margin-left: auto; margin-right: 8px; }
.apps { display: flex; margin-left: 6px; flex: none; }
.apps div { width: 39px; height: 40px; display: flex; align-items: center; justify-content: center; position: relative; }
.apps .left1 { width: 38px; } .apps .left1:first-child { width: 36px; } .apps .left1:nth-child(3) { width: 43px; }
.apps svg { width: 24px; height: 24px; }
.run { background: linear-gradient(#454545, #454545) 50% 100%/30px 2px no-repeat; }
.run.cur { background: linear-gradient(#454545, #454545) 50% 100%/39px 2px no-repeat, #f2f2f2; }
.run em { position: absolute; left: 9px; top: 18px; padding: 0 2px; height: 18px; border: 1px solid #777; border-radius: 9px; background: #ddd; font: 12.500px/16px "Open Sans", sans-serif; letter-spacing: -.3px; }
.run.cur em { left: 17px; top: 18px; width: 16px; height: 16px; border: 0; padding: 0; background: #512da8; color: #fff; font: 9px/16px Roboto, sans-serif; text-align: center; }
.word { font: 700 15px "Liberation Sans", sans-serif; fill: #2b5fae; }
.pc { font: 700 7.500px "Open Sans", sans-serif; fill: #fff; }
.news { margin-left: 18px; width: 94px; display: flex; flex: none; align-items: center; gap: 8px; }
.news span { font-size: 13.500px; letter-spacing: -.2px; }
.tray { display: flex; align-items: center; }
.tray svg { margin-right: 11px; }
.tray .batt { margin-right: 9px; }
.lang { font-size: 12px; width: 24px; letter-spacing: -.3px; }
.clock { width: 60px; margin-left: 12px; display: flex; flex-direction: column; align-items: center; font-size: 12px; line-height: 18px; letter-spacing: -.4px; white-space: nowrap; }
.tray .note { margin: 0 0 0 17px; }
```
